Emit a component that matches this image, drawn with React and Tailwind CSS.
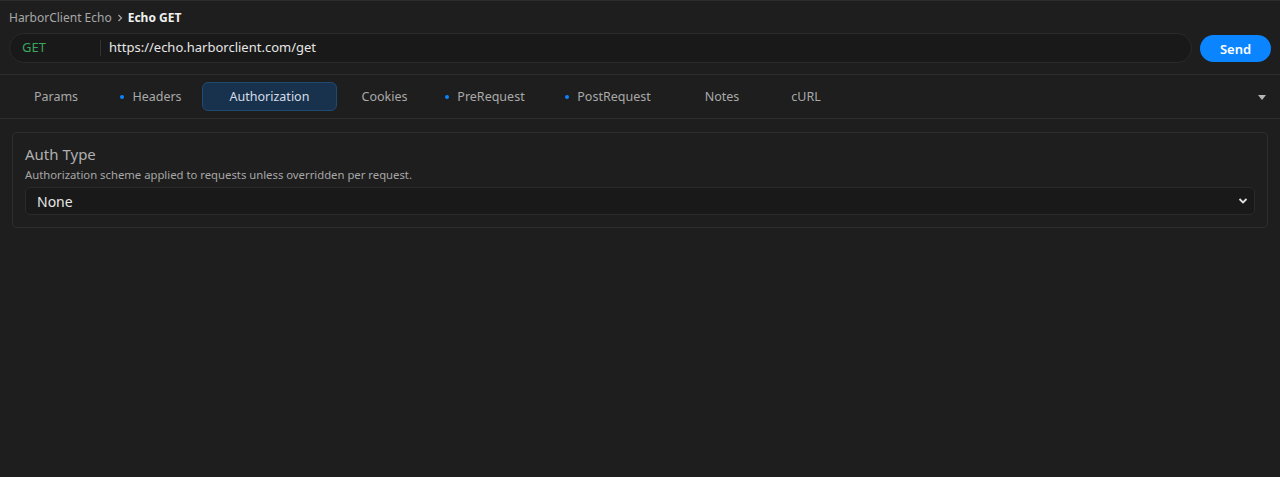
import React, { useState } from 'react';

const font = { fontFamily: '"Noto Sans", "Open Sans", sans-serif' };

const tabs = [
  { name: 'Params', w: 'w-[88px]', dot: false },
  { name: 'Headers', w: 'w-[94px]', dot: true },
  { name: 'Authorization', w: 'w-[135px]', dot: false },
  { name: 'Cookies', w: 'w-[87px]', dot: false },
  { name: 'PreRequest', w: 'w-[106px]', dot: true },
  { name: 'PostRequest', w: 'w-[132px]', dot: true },
  { name: 'Notes', w: 'w-[88px]', dot: false },
  { name: 'cURL', w: 'w-[72px]', dot: false },
];

const App = () => {
  const [active, setActive] = useState('Authorization');

  return (
    <div className="w-[1280px] h-[477px] bg-[#1e1e1e] border-t border-[#2c2c2c] text-[#cfcfcf] overflow-hidden" style={font}>
      {/* breadcrumb + url */}
      <div className="px-[9px] pt-[8px] pb-[11px]">
        <div className="flex items-center gap-[3px] text-[12px] leading-[18px] h-[18px]">
          <span className="text-[#a8a8a8]">HarborClient Echo</span>
          <svg width="10" height="10" viewBox="0 0 10 10" className="text-[#a8a8a8]">
            <path d="M3.5 2 L6.5 5 L3.5 8" fill="none" stroke="currentColor" strokeWidth="1.2" />
          </svg>
          <span className="text-[#f0f0f0] font-bold">Echo GET</span>
        </div>
        <div className="flex items-center gap-2 mt-[6px]">
          <div className="flex-1 h-[30px] flex items-center rounded-full bg-[#191919] border border-[#2a2a2a]">
            <span className="w-[90px] pl-[12px] text-[13px] text-[#3aa55d]">GET</span>
            <div className="w-px h-[16px] bg-[#333]" />
            <span className="pl-[8px] text-[13px] text-[#e6e6e6]">https://echo.harborclient.com/get</span>
          </div>
          <button className="w-[71px] h-[27px] rounded-full bg-[#0a84ff] text-white text-[13px] font-semibold leading-[27px] pt-[1px]">
            Send
          </button>
        </div>
      </div>

      {/* tabs */}
      <div className="border-t border-b border-[#2e2e2e] h-[45px] flex items-center pl-[12px] pr-[14px]">
        <div className="flex items-center gap-[4px]">
          {tabs.map((t) => (
            <button
              key={t.name}
              onClick={() => setActive(t.name)}
              className={`${t.w} h-[29px] pt-[1px] flex items-center justify-center gap-[8px] rounded-[6px] text-[12.5px] border ${
                active === t.name
                  ? 'bg-[#18324e] border-[#1f4a72] text-[#d6dde6]'
                  : 'border-transparent text-[#a9a9a9]'
              }`}
            >
              {t.dot && <span className="w-[4px] h-[4px] rounded-full bg-[#0a84ff]" />}
              {t.name}
            </button>
          ))}
        </div>
        <div className="flex-1" />
        <svg width="8" height="5" viewBox="0 0 8 5" className="mt-[2px]">
          <path d="M0 0 H8 L4 5 Z" fill="#b5b5b5" />
        </svg>
      </div>

      {/* content */}
      <div className="px-[12px] pt-[13px]">
        <div className="border border-[#2e2e2e] rounded-[5px] px-[12px] pt-[11px] pb-[12px]">
          <div className="text-[15px] leading-[20px] text-[#b0b0b0]">Auth Type</div>
          <div className="text-[11.3px] leading-[16px] text-[#a6a6a6] mt-[3px]">
            Authorization scheme applied to requests unless overridden per request.
          </div>
          <div className="mt-[4px] h-[28px] flex items-center rounded-[5px] bg-[#191919] border border-[#2a2a2a] pl-[11px] pr-[6px]">
            <span className="text-[14px] text-[#e6e6e6]">None</span>
            <div className="flex-1" />
            <svg width="10" height="8" viewBox="0 0 10 8">
              <path d="M1.5 2 L5 5.5 L8.5 2" fill="none" stroke="#e0e0e0" strokeWidth="1.8" />
            </svg>
          </div>
        </div>
      </div>
    </div>
  );
};

export default App;
